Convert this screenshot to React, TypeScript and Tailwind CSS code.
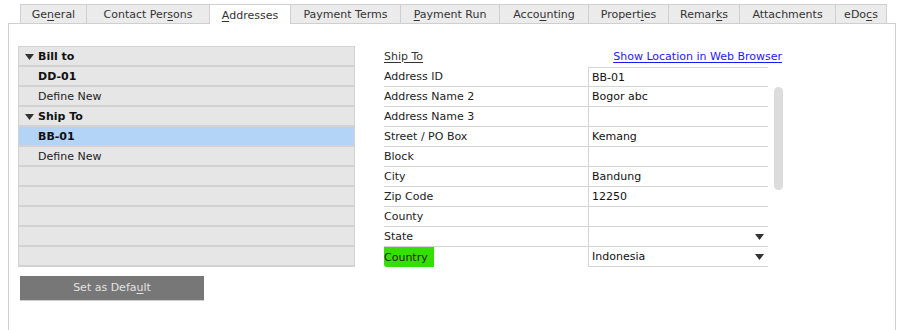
const tabs = [
  { pre: 'Ge', u: 'n', post: 'eral', w: 'w-[67px]' },
  { pre: 'Contact Per', u: 's', post: 'ons', w: 'w-[123px]' },
  { pre: '', u: 'A', post: 'ddresses', w: 'w-[81px]', active: true },
  { pre: 'Payment Terms', u: '', post: '', w: 'w-[110px]' },
  { pre: '', u: 'P', post: 'ayment Run', w: 'w-[99px]' },
  { pre: 'Acco', u: 'u', post: 'nting', w: 'w-[89px]' },
  { pre: 'Propert', u: 'i', post: 'es', w: 'w-[80px]' },
  { pre: 'Remar', u: 'k', post: 's', w: 'w-[71px]' },
  { pre: 'Attachments', u: '', post: '', w: 'w-[96px]' },
  { pre: 'eDo', u: 'c', post: 's', w: 'w-[51px]' },
];

const treeRows = [
  { text: 'Bill to', bold: true, arrow: true },
  { text: 'DD-01', bold: true },
  { text: 'Define New' },
  { text: 'Ship To', bold: true, arrow: true },
  { text: 'BB-01', bold: true, selected: true },
  { text: 'Define New' },
  { text: '' },
  { text: '' },
  { text: '' },
  { text: '' },
  { text: '' },
];

const fields = [
  { label: 'Address ID', value: 'BB-01' },
  { label: 'Address Name 2', value: 'Bogor abc' },
  { label: 'Address Name 3', value: '' },
  { label: 'Street / PO Box', value: 'Kemang' },
  { label: 'Block', value: '' },
  { label: 'City', value: 'Bandung' },
  { label: 'Zip Code', value: '12250' },
  { label: 'County', value: '' },
  { label: 'State', value: '', dropdown: true },
  { label: 'Country', value: 'Indonesia', dropdown: true, highlight: true, last: true },
];

function DownTriangle({ className }: { className?: string }) {
  return (
    <svg width="9" height="6" viewBox="0 0 9 6" className={className}>
      <polygon points="0,0 9,0 4.5,6" fill="#333" />
    </svg>
  );
}

export default function App() {
  return (
    <div className="w-[901px] h-[330px] bg-white overflow-hidden text-[11px] text-[#222]" style={{ fontFamily: '"DejaVu Sans", Verdana, sans-serif' }}>
      {/* tab strip */}
      <div className="flex ml-[8px] w-[888px] pt-[4px]">
        <div className="w-[12px] border-b border-[#cfcfcf]" />
        {tabs.map((t, i) => (
          <div
            key={i}
            className={`${t.w} h-[20px] flex items-center justify-center pt-[3px] border-t border-r border-[#cfcfcf] ${i === 0 ? 'border-l' : ''} ${
              t.active ? 'bg-white border-b-0' : 'bg-[#ebebeb] border-b'
            } text-[#333]`}
          >
            <span>
              {t.pre}
              {t.u && <span className="underline underline-offset-2">{t.u}</span>}
              {t.post}
            </span>
          </div>
        ))}
        <div className="flex-1 border-b border-[#cfcfcf]" />
      </div>

      {/* panel */}
      <div className="ml-[8px] w-[888px] h-[306px] border-l border-r border-[#cfcfcf] flex pt-[22px] pl-[9px]">
        {/* left tree */}
        <div className="flex flex-col">
          <div className="w-[337px] border border-[#d2d2d2] border-b-0 bg-[#e6e6e6]">
            {treeRows.map((r, i) => (
              <div
                key={i}
                className={`h-[20px] border-b-2 border-[#d2d2d2] flex items-center pt-[3px] ${r.selected ? 'bg-[#b3d3f7]' : ''} ${
                  r.bold ? 'font-bold text-[#111]' : 'text-[#222]'
                }`}
              >
                <div className="w-[19px] flex justify-center pl-[2px] pb-[1px]">{r.arrow && <DownTriangle />}</div>
                <span>{r.text}</span>
              </div>
            ))}
          </div>
          <button className="mt-[9px] ml-[2px] w-[184px] h-[25px] bg-[#777777] text-[#e2e2e2] border-b border-[#cfcfcf] text-[11px]">
            Set as Defa<span className="underline underline-offset-2">u</span>lt
          </button>
        </div>

        {/* right form */}
        <div className="ml-[29px] flex flex-col">
          <div className="h-[21px] flex items-end justify-between w-[398px] pb-[2px]">
            <span className="underline underline-offset-2 text-[#333]">Ship To</span>
            <span className="underline underline-offset-2 text-[#1a1aff]">Show Location in Web Browser</span>
          </div>
          <div className="flex">
            <div className="flex flex-col w-[384px]">
              {fields.map((f, i) => (
                <div key={i} className="flex h-[20px]">
                  <div className={`w-[204px] flex items-center ${f.last ? '' : 'border-b border-[#d4d4d4]'}`}>
                    {f.highlight ? (
                      <span className="bg-[#33e000] h-[20px] flex items-center pt-[2px] pr-[6px] rounded-bl-[3px]">{f.label}</span>
                    ) : (
                      <span className="pt-[2px]">{f.label}</span>
                    )}
                  </div>
                  <div
                    className={`w-[180px] border-l border-b border-[#d4d4d4] ${i === 0 ? 'border-t' : ''} flex items-center justify-between pl-[3px] pr-[4px] text-[#111]`}
                  >
                    <span className="pt-[2px]">{f.value}</span>
                    {f.dropdown && <DownTriangle />}
                  </div>
                </div>
              ))}
            </div>
            <div className="ml-[6px] mt-[20px] w-[9px] h-[103px] rounded-full bg-[#dcdcdc]" />
          </div>
        </div>
      </div>
    </div>
  );
}
